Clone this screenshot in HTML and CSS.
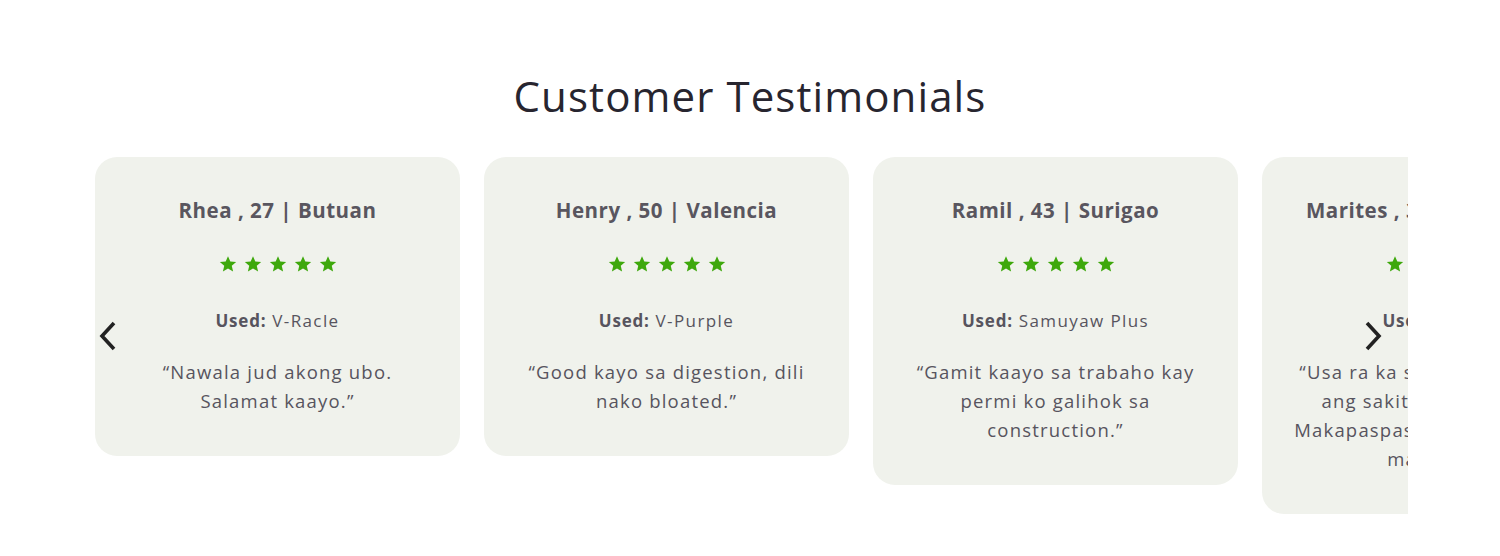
FILE: index.html
```html
<!DOCTYPE html>
<html lang="en">
<head>
<meta charset="utf-8">
<title>Customer Testimonials</title>
<link rel="stylesheet" href="styles.css">
</head>
<body>
<section class="testimonials">
  <h2 class="title">Customer Testimonials</h2>
  <div class="slider">
    <div class="viewport">
      <div class="track">
        <article class="card">
          <h3 class="name">Rhea , 27 | Butuan</h3>
          <div class="stars"><svg viewBox="0 0 24 24"><path d="M12 1.5l3.1 7.2 7.8.6-5.9 5.1 1.8 7.6L12 17.9 5.2 22l1.8-7.6L1.1 9.3l7.8-.6z"/></svg><svg viewBox="0 0 24 24"><path d="M12 1.5l3.1 7.2 7.8.6-5.9 5.1 1.8 7.6L12 17.9 5.2 22l1.8-7.6L1.1 9.3l7.8-.6z"/></svg><svg viewBox="0 0 24 24"><path d="M12 1.5l3.1 7.2 7.8.6-5.9 5.1 1.8 7.6L12 17.9 5.2 22l1.8-7.6L1.1 9.3l7.8-.6z"/></svg><svg viewBox="0 0 24 24"><path d="M12 1.5l3.1 7.2 7.8.6-5.9 5.1 1.8 7.6L12 17.9 5.2 22l1.8-7.6L1.1 9.3l7.8-.6z"/></svg><svg viewBox="0 0 24 24"><path d="M12 1.5l3.1 7.2 7.8.6-5.9 5.1 1.8 7.6L12 17.9 5.2 22l1.8-7.6L1.1 9.3l7.8-.6z"/></svg></div>
          <p class="used"><strong>Used:</strong> V-Racle</p>
          <p class="quote">“Nawala jud akong ubo.<br>Salamat kaayo.”</p>
        </article>
        <article class="card">
          <h3 class="name">Henry , 50 | Valencia</h3>
          <div class="stars"><svg viewBox="0 0 24 24"><path d="M12 1.5l3.1 7.2 7.8.6-5.9 5.1 1.8 7.6L12 17.9 5.2 22l1.8-7.6L1.1 9.3l7.8-.6z"/></svg><svg viewBox="0 0 24 24"><path d="M12 1.5l3.1 7.2 7.8.6-5.9 5.1 1.8 7.6L12 17.9 5.2 22l1.8-7.6L1.1 9.3l7.8-.6z"/></svg><svg viewBox="0 0 24 24"><path d="M12 1.5l3.1 7.2 7.8.6-5.9 5.1 1.8 7.6L12 17.9 5.2 22l1.8-7.6L1.1 9.3l7.8-.6z"/></svg><svg viewBox="0 0 24 24"><path d="M12 1.5l3.1 7.2 7.8.6-5.9 5.1 1.8 7.6L12 17.9 5.2 22l1.8-7.6L1.1 9.3l7.8-.6z"/></svg><svg viewBox="0 0 24 24"><path d="M12 1.5l3.1 7.2 7.8.6-5.9 5.1 1.8 7.6L12 17.9 5.2 22l1.8-7.6L1.1 9.3l7.8-.6z"/></svg></div>
          <p class="used"><strong>Used:</strong> V-Purple</p>
          <p class="quote">“Good kayo sa digestion, dili<br>nako bloated.”</p>
        </article>
        <article class="card">
          <h3 class="name">Ramil , 43 | Surigao</h3>
          <div class="stars"><svg viewBox="0 0 24 24"><path d="M12 1.5l3.1 7.2 7.8.6-5.9 5.1 1.8 7.6L12 17.9 5.2 22l1.8-7.6L1.1 9.3l7.8-.6z"/></svg><svg viewBox="0 0 24 24"><path d="M12 1.5l3.1 7.2 7.8.6-5.9 5.1 1.8 7.6L12 17.9 5.2 22l1.8-7.6L1.1 9.3l7.8-.6z"/></svg><svg viewBox="0 0 24 24"><path d="M12 1.5l3.1 7.2 7.8.6-5.9 5.1 1.8 7.6L12 17.9 5.2 22l1.8-7.6L1.1 9.3l7.8-.6z"/></svg><svg viewBox="0 0 24 24"><path d="M12 1.5l3.1 7.2 7.8.6-5.9 5.1 1.8 7.6L12 17.9 5.2 22l1.8-7.6L1.1 9.3l7.8-.6z"/></svg><svg viewBox="0 0 24 24"><path d="M12 1.5l3.1 7.2 7.8.6-5.9 5.1 1.8 7.6L12 17.9 5.2 22l1.8-7.6L1.1 9.3l7.8-.6z"/></svg></div>
          <p class="used"><strong>Used:</strong> Samuyaw Plus</p>
          <p class="quote">“Gamit kaayo sa trabaho kay<br>permi ko galihok sa<br>construction.”</p>
        </article>
        <article class="card">
          <h3 class="name">Marites , 38 | Cabadbaran</h3>
          <div class="stars"><svg viewBox="0 0 24 24"><path d="M12 1.5l3.1 7.2 7.8.6-5.9 5.1 1.8 7.6L12 17.9 5.2 22l1.8-7.6L1.1 9.3l7.8-.6z"/></svg><svg viewBox="0 0 24 24"><path d="M12 1.5l3.1 7.2 7.8.6-5.9 5.1 1.8 7.6L12 17.9 5.2 22l1.8-7.6L1.1 9.3l7.8-.6z"/></svg><svg viewBox="0 0 24 24"><path d="M12 1.5l3.1 7.2 7.8.6-5.9 5.1 1.8 7.6L12 17.9 5.2 22l1.8-7.6L1.1 9.3l7.8-.6z"/></svg><svg viewBox="0 0 24 24"><path d="M12 1.5l3.1 7.2 7.8.6-5.9 5.1 1.8 7.6L12 17.9 5.2 22l1.8-7.6L1.1 9.3l7.8-.6z"/></svg><svg viewBox="0 0 24 24"><path d="M12 1.5l3.1 7.2 7.8.6-5.9 5.1 1.8 7.6L12 17.9 5.2 22l1.8-7.6L1.1 9.3l7.8-.6z"/></svg></div>
          <p class="used"><strong>Used:</strong> V-Racle</p>
          <p class="quote">“Usa ra ka semana, nawala na<br>ang sakit sa akong lawas.<br>Makapaspas ko sa trabaho nga<br>malipayon.”</p>
        </article>
      </div>
    </div>
    <button class="arrow prev" aria-label="Previous"><svg viewBox="0 0 20 32"><path d="M16 3L4 16l12 13"/></svg></button>
    <button class="arrow next" aria-label="Next"><svg viewBox="0 0 20 32"><path d="M4 3l12 13L4 29"/></svg></button>
  </div>
</section>
</body>
</html>
```
FILE: styles.css
```css
* { box-sizing: border-box; }
body {
  margin: 0;
  background: #fff;
  font-family: "Open Sans", "Noto Sans", sans-serif;
  color: #57545e;
}
.testimonials {
  padding: 71px 0 0 95px;
}
.title {
  margin: 0 0 36px -95px;
  text-align: center;
  font-size: 42px;
  font-weight: 400;
  letter-spacing: 1.1px;
  line-height: 50px;
  color: #27252f;
}
.slider {
  position: relative;
  width: 1313px;
}
.viewport {
  overflow: hidden;
  width: 1313px;
}
.track {
  display: flex;
  gap: 24px;
  align-items: flex-start;
}
.card {
  flex: 0 0 365px;
  background: #f0f2ec;
  border-radius: 22px;
  padding: 38px 18px 41px;
  text-align: center;
}
.name {
  margin: 0;
  font-size: 20.5px;
  line-height: 30px;
  font-weight: 700;
  color: #59565f;
  letter-spacing: 0.5px;
  white-space: nowrap;
}
.stars {
  display: flex;
  justify-content: center;
  gap: 7px;
  margin-top: 30px;
  height: 18px;
}
.stars svg {
  width: 18px;
  height: 18px;
  fill: #3ea80c;
}
.used {
  margin: 36px 0 0;
  font-size: 17px;
  line-height: 24px;
  letter-spacing: 1.4px;
}
.used strong { font-weight: 700; letter-spacing: 0.8px; }
.quote {
  margin: 24px 0 0;
  font-size: 18.5px;
  line-height: 29px;
  letter-spacing: 1.2px;
  white-space: nowrap;
}
.arrow {
  position: absolute;
  top: 162px;
  width: 24px;
  height: 36px;
  padding: 0;
  border: 0;
  background: transparent;
  cursor: pointer;
}
.arrow svg {
  width: 20px;
  height: 32px;
  fill: none;
  stroke: #222;
  stroke-width: 3.6;
}
.prev { left: 1px; }
.next { left: 1266px; }
```
